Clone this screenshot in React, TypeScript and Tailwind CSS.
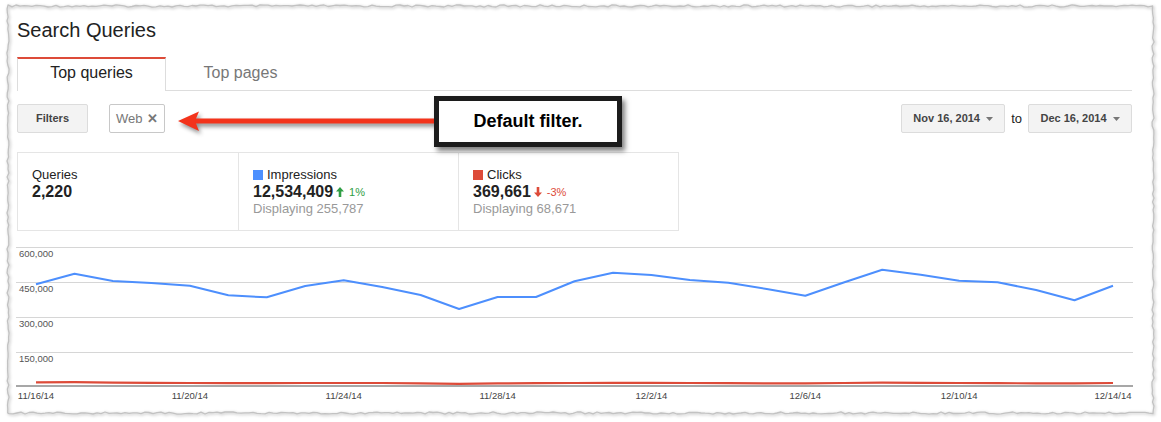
import React from "react";

const blue = [
  284.3, 273.7, 281, 283, 285.7, 295.3, 297.3, 286, 280.3, 287, 295, 309, 297, 297, 281.3,
  272.7, 275, 280, 282.7, 289, 295.7, 282.5, 269.7, 274.7, 280.7, 282.3, 290, 300.3, 285.7,
];
const red = [
  382.3, 382.2, 382.6, 382.8, 383, 383.2, 383.2, 383, 383, 383, 383.3, 383.8, 383.4, 383.2, 383,
  382.8, 382.8, 383, 383.2, 383.3, 383.3, 383, 382.7, 382.8, 383, 383.2, 383.3, 383.3, 383,
];

const px = (i: number) => 20 + i * 38.464;
const toPoints = (arr: number[]) =>
  arr.map((y, i) => `${px(i).toFixed(1)},${(y - 231).toFixed(1)}`).join(" ");

const yLabels = [
  { t: "600,000", y: 26.3 },
  { t: "450,000", y: 61.3 },
  { t: "300,000", y: 96.3 },
  { t: "150,000", y: 131.3 },
];
const xLabels = ["11/16/14", "11/20/14", "11/24/14", "11/28/14", "12/2/14", "12/6/14", "12/10/14", "12/14/14"];

// rough "torn paper" outline around the screenshot
const jitter = (n: number) => {
  const s = Math.sin(n * 12.9898) * 43758.5453;
  return (s - Math.floor(s)) * 2 - 1;
};
const tornEdge = (() => {
  const L = 8, T = 6, R = 1153, B = 413;
  const pts: string[] = [];
  let k = 0;
  for (let x = L; x < R; x += 4) pts.push(`${x},${(T + jitter(k++) * 1.1).toFixed(1)}`);
  for (let y = T; y < B; y += 4) pts.push(`${(R + jitter(k++) * 1.1).toFixed(1)},${y}`);
  for (let x = R; x > L; x -= 4) pts.push(`${x},${(B + jitter(k++) * 1.1).toFixed(1)}`);
  for (let y = B; y > T; y -= 4) pts.push(`${(L + jitter(k++) * 1.1).toFixed(1)},${y}`);
  return pts.join(" ");
})();

const Caret = () => (
  <svg width="7" height="4" viewBox="0 0 7 4" className="ml-[6px]">
    <path d="M0 0h7L3.5 4z" fill="#777" />
  </svg>
);

const DateButton = ({ label }: { label: string }) => (
  <div className="flex h-[29px] w-[104px] items-center justify-center rounded-[2px] border border-[#dcdcdc] bg-[#f3f3f3] text-[11px] font-bold text-[#444]">
    {label}
    <Caret />
  </div>
);

const Chart = () => (
  <svg width="1117" height="175" className="-ml-px block">
    {[16.5, 51.5, 86.5, 121.5].map((y) => (
      <line key={y} x1="0" x2="1117" y1={y} y2={y} stroke="#d6d6d6" strokeWidth="1" />
    ))}
    <line x1="0" x2="1117" y1="155" y2="155" stroke="#8a8a8a" strokeWidth="1.5" />
    {yLabels.map((l) => (
      <text key={l.t} x="3" y={l.y} fontSize="9.5" fill="#555">
        {l.t}
      </text>
    ))}
    {xLabels.map((l, i) => (
      <text key={l} x={px(i * 4)} y="168.3" fontSize="9.5" fill="#444" textAnchor="middle">
        {l}
      </text>
    ))}
    <polyline points={toPoints(red)} fill="none" stroke="#dd4b39" strokeWidth="2.2" strokeLinejoin="round" />
    <polyline points={toPoints(blue)} fill="none" stroke="#4d8ffd" strokeWidth="2" strokeLinejoin="round" />
  </svg>
);

const StatCell = ({
  label,
  value,
  swatch,
  change,
  up,
  shown,
  first,
}: {
  label: string;
  value: string;
  swatch?: string;
  change?: string;
  up?: boolean;
  shown?: string;
  first?: boolean;
}) => (
  <div className={`pl-[14px] pt-[14px] ${first ? "" : "border-l border-[#e5e5e5]"}`}>
    <div className="flex h-4 items-center text-[13px] leading-4 text-[#222]">
      {swatch && <span className={`mr-[4px] h-[10px] w-[10px] ${swatch}`} />}
      {label}
    </div>
    <div className="flex h-[18px] items-center text-[16px] font-bold leading-[18px] text-[#222]">
      {value}
      {change && (
        <span className={`ml-[3px] flex items-center text-[11px] font-normal ${up ? "text-[#2f9e44]" : "text-[#dd4b39]"}`}>
          <svg width="8" height="10" viewBox="0 0 8 10" className="mr-[5px]">
            {up ? (
              <path d="M4 0L8 4.5H5.3V10H2.7V4.5H0z" fill="#2f9e44" />
            ) : (
              <path d="M4 10L8 5.5H5.3V0H2.7V5.5H0z" fill="#dd4b39" />
            )}
          </svg>
          {change}
        </span>
      )}
    </div>
    {shown && <div className="h-4 text-[13px] leading-4 text-[#999]">{shown}</div>}
  </div>
);

export default function App() {
  return (
    <div className="relative h-[422px] w-[1161px] overflow-hidden bg-white pl-[8px] pt-[6px] font-['Liberation_Sans',Arial,sans-serif]">
      <div className="h-[407px] w-[1145px] bg-white pl-[9px] pr-[21px] pt-[12px]">
        <h1 className="h-6 text-[20px] leading-6 text-[#222]">Search Queries</h1>

        <div className="mt-[15px] flex h-[34px]">
          <div className="flex w-[149px] items-center justify-center border-x border-t-2 border-x-[#ddd] border-t-[#dd4b39] pb-[5px] text-[16px] text-[#222]">
            Top queries
          </div>
          <div className="flex w-[149px] items-center justify-center border-b border-[#ddd] pb-[2px] text-[16px] text-[#777]">
            Top pages
          </div>
          <div className="flex-1 border-b border-[#ddd]" />
        </div>

        <div className="mt-[13px] flex h-[29px] items-center">
          <div className="flex h-[29px] w-[71px] items-center justify-center rounded-[2px] border border-[#dcdcdc] bg-[#f3f3f3] text-[11px] font-bold text-[#444]">
            Filters
          </div>
          <div className="ml-[21px] flex h-[29px] w-[56px] items-center rounded-[2px] border border-[#c8c8c8] pl-[6px] text-[13px] text-[#777]">
            Web
            <span className="ml-[4px] text-[13px] font-bold text-[#777]">✕</span>
          </div>
          <div className="ml-auto flex items-center">
            <DateButton label="Nov 16, 2014" />
            <span className="mx-[6px] text-[13px] text-[#222]">to</span>
            <DateButton label="Dec 16, 2014" />
          </div>
        </div>

        <div className="mt-[19px] grid h-[79px] w-[662px] grid-cols-3 border border-[#e5e5e5]">
          <StatCell first label="Queries" value="2,220" />
          <StatCell
            label="Impressions"
            value="12,534,409"
            swatch="bg-[#4d90fe]"
            change="1%"
            up
            shown="Displaying 255,787"
          />
          <StatCell
            label="Clicks"
            value="369,661"
            swatch="bg-[#dd4b39]"
            change="-3%"
            shown="Displaying 68,671"
          />
        </div>

        <Chart />
      </div>

      {/* torn paper edge */}
      <svg
        width="1161"
        height="422"
        className="pointer-events-none absolute left-0 top-0 drop-shadow-[1px_1px_1.5px_rgba(0,0,0,0.3)]"
      >
        <polygon points={tornEdge} fill="none" stroke="#c2c2c2" strokeWidth="1.3" strokeLinejoin="round" />
      </svg>

      {/* annotation overlay */}
      <svg
        width="270"
        height="30"
        viewBox="0 0 270 30"
        className="absolute left-[176px] top-[106px] drop-shadow-[2px_3px_2px_rgba(0,0,0,0.45)]"
      >
        <line x1="18" x2="262" y1="15" y2="15" stroke="#f3331b" strokeWidth="5" />
        <path d="M2 15L23 5.5L19 15L23 25z" fill="#f3331b" />
      </svg>
      <div className="absolute left-[434px] top-[96px] flex h-[51px] w-[188px] items-center justify-center border-[5px] border-[#1c1c1c] bg-white text-[18px] font-bold text-black shadow-[3px_4px_5px_rgba(0,0,0,0.5)]">
        Default filter.
      </div>
    </div>
  );
}
